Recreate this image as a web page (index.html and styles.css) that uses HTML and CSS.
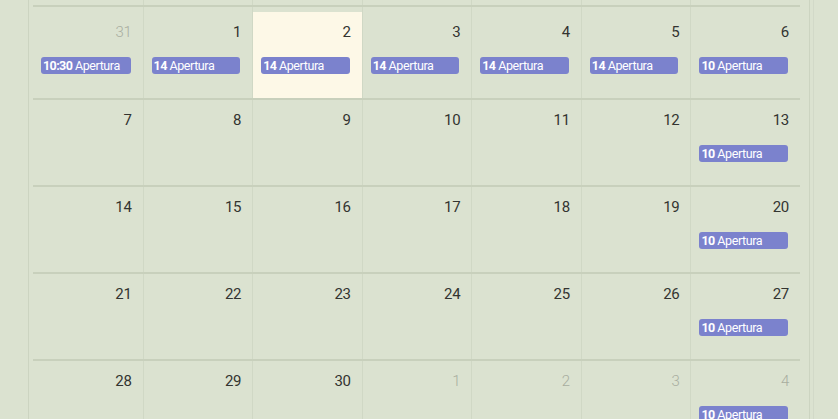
FILE: index.html
```html
<!DOCTYPE html>
<html lang="it">
<head>
<meta charset="utf-8">
<link rel="stylesheet" href="styles.css">
</head>
<body>
<div class="outer">
  <div class="panel">
    <div class="month">
      <div class="strip">
        <div class="sc"></div><div class="sc"></div><div class="sc"></div><div class="sc"></div><div class="sc"></div><div class="sc"></div><div class="sc"></div>
      </div>
      <div class="week first">
        <div class="day other"><div class="frame"><div class="num">31</div><div class="ev"><b>10:30</b> Apertura</div></div></div>
        <div class="day"><div class="frame"><div class="num">1</div><div class="ev"><b>14</b> Apertura</div></div></div>
        <div class="day today"><div class="frame"><div class="num">2</div><div class="ev"><b>14</b> Apertura</div></div></div>
        <div class="day"><div class="frame"><div class="num">3</div><div class="ev"><b>14</b> Apertura</div></div></div>
        <div class="day"><div class="frame"><div class="num">4</div><div class="ev"><b>14</b> Apertura</div></div></div>
        <div class="day"><div class="frame"><div class="num">5</div><div class="ev"><b>14</b> Apertura</div></div></div>
        <div class="day"><div class="frame"><div class="num">6</div><div class="ev"><b>10</b> Apertura</div></div></div>
      </div>
      <div class="week">
        <div class="day"><div class="frame"><div class="num">7</div></div></div>
        <div class="day"><div class="frame"><div class="num">8</div></div></div>
        <div class="day"><div class="frame"><div class="num">9</div></div></div>
        <div class="day"><div class="frame"><div class="num">10</div></div></div>
        <div class="day"><div class="frame"><div class="num">11</div></div></div>
        <div class="day"><div class="frame"><div class="num">12</div></div></div>
        <div class="day"><div class="frame"><div class="num">13</div><div class="ev"><b>10</b> Apertura</div></div></div>
      </div>
      <div class="week">
        <div class="day"><div class="frame"><div class="num">14</div></div></div>
        <div class="day"><div class="frame"><div class="num">15</div></div></div>
        <div class="day"><div class="frame"><div class="num">16</div></div></div>
        <div class="day"><div class="frame"><div class="num">17</div></div></div>
        <div class="day"><div class="frame"><div class="num">18</div></div></div>
        <div class="day"><div class="frame"><div class="num">19</div></div></div>
        <div class="day"><div class="frame"><div class="num">20</div><div class="ev"><b>10</b> Apertura</div></div></div>
      </div>
      <div class="week">
        <div class="day"><div class="frame"><div class="num">21</div></div></div>
        <div class="day"><div class="frame"><div class="num">22</div></div></div>
        <div class="day"><div class="frame"><div class="num">23</div></div></div>
        <div class="day"><div class="frame"><div class="num">24</div></div></div>
        <div class="day"><div class="frame"><div class="num">25</div></div></div>
        <div class="day"><div class="frame"><div class="num">26</div></div></div>
        <div class="day"><div class="frame"><div class="num">27</div><div class="ev"><b>10</b> Apertura</div></div></div>
      </div>
      <div class="week">
        <div class="day"><div class="frame"><div class="num">28</div></div></div>
        <div class="day"><div class="frame"><div class="num">29</div></div></div>
        <div class="day"><div class="frame"><div class="num">30</div></div></div>
        <div class="day other"><div class="frame"><div class="num">1</div></div></div>
        <div class="day other"><div class="frame"><div class="num">2</div></div></div>
        <div class="day other"><div class="frame"><div class="num">3</div></div></div>
        <div class="day other"><div class="frame"><div class="num">4</div><div class="ev"><b>10</b> Apertura</div></div></div>
      </div>
    </div>
  </div>
</div>
</body>
</html>
```

FILE: styles.css
```css
html, body {
  margin: 0;
  padding: 0;
  background: #dbe2d0;
  overflow: hidden;
}
body {
  font-family: "Roboto", "Liberation Sans", sans-serif;
  color: #2e2f2b;
}
.outer {
  margin-left: 28px;
  width: 781px;
  border-left: 1px solid #ccd4c1;
  border-right: 1px solid #d2d9c8;
  padding-right: 3px;
  height: 460px;
}
.panel {
  border-right: 1px solid #ccd4c1;
  padding-left: 4px;
  padding-right: 9px;
  height: 100%;
}
.month {
  width: 767px;
}
.strip, .week {
  display: grid;
  grid-template-columns: repeat(7, minmax(0, 1fr));
}
.strip {
  height: 5px;
}
.sc + .sc,
.day + .day {
  border-left: 1px solid #d0d8c5;
}
.week {
  border-top: 2px solid #c8d0bc;
}
.day {
  height: 85px;
  min-width: 0;
}
.week.first .day {
  height: 91px;
  padding-top: 5px;
  box-sizing: border-box;
}
.frame {
  height: 100%;
  box-sizing: border-box;
  padding-top: 10px;
}
.today .frame {
  background: #fdf8e7;
}
.num {
  text-align: right;
  font-size: 15px;
  line-height: 20px;
  padding-right: 11px;
  color: #333430;
  letter-spacing: -0.3px;
}
.other .num {
  color: #a8ad9f;
  font-weight: 300;
}
.ev {
  margin: 15px 12px 0 8px;
  height: 17px;
  line-height: 17px;
  background: #7b82cd;
  border-radius: 3px;
  color: #fff;
  font-size: 12.5px;
  letter-spacing: -0.4px;
  padding-left: 2px;
  white-space: nowrap;
  overflow: hidden;
}
.ev b {
  font-weight: 700;
  letter-spacing: -0.6px;
}
```
